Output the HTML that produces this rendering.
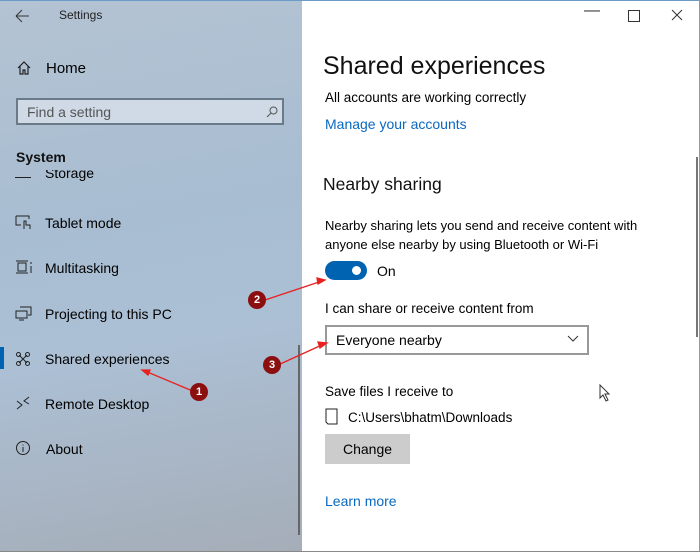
<!DOCTYPE html>
<html><head><style>
body{margin:0;width:700px;height:552px;overflow:hidden;font-family:"Liberation Sans",sans-serif;position:relative;background:#fff}
.l{position:absolute;left:0;top:0;width:302px;height:552px;background:linear-gradient(170deg,#b4c3d3 0%,#a8bdd2 40%,#acc0d5 60%,#a5adb8 100%)}
.t{position:absolute;white-space:nowrap;color:#000}
.s{font-size:14px}
.n{position:absolute;left:0;top:0;width:700px;height:1px;background:#6d9bc8}
.ball{position:absolute;width:18px;height:18px;border-radius:50%;background:#8b0f0f;color:#fff;font-size:11px;font-weight:bold;text-align:center;line-height:18px}
</style></head><body>
<div class="l"></div>
<div class="n"></div>
<div style="position:absolute;right:0;top:0;width:1px;height:552px;background:#999"></div>
<div style="position:absolute;left:0;bottom:0;width:700px;height:1px;background:#888"></div>
<svg style="position:absolute;left:14px;top:8px" width="16" height="16"><path d="M2 8H15M2 8L8 2M2 8L8 14" stroke="#333" fill="none" stroke-width="1"/></svg>
<div class="t" style="left:59px;top:8px;font-size:12px;color:#222">Settings</div>
<svg style="position:absolute;left:16px;top:60px" width="16" height="16"><path d="M2 8L8 2L14 8M4 6V14H7V10H9V14H12V6" stroke="#222" fill="none" stroke-width="1.2"/></svg>
<div class="t s" style="left:46px;top:60px;font-size:15px">Home</div>
<div style="position:absolute;left:16px;top:98px;width:268px;height:27px;border:2px solid #6b7a88;background:#cfdae6;box-sizing:border-box"></div>
<div class="t" style="left:27px;top:104px;font-size:14px;color:#555">Find a setting</div>
<svg style="position:absolute;left:266px;top:106px" width="12" height="12"><circle cx="7.5" cy="4.5" r="3.5" stroke="#555" fill="none"/><path d="M5 7L1 11" stroke="#555"/></svg>
<div class="t" style="left:16px;top:149px;font-size:14px;font-weight:bold;color:#111">System</div>
<div class="t s" style="left:45px;top:170px;font-size:14px;height:12px;overflow:hidden"><span style="position:relative;top:-5px">Storage</span></div>
<div style="position:absolute;left:15px;top:177px;width:16px;height:1px;background:#222"></div>
<div class="t s" style="left:45px;top:215px">Tablet mode</div>
<svg style="position:absolute;left:15px;top:214px" width="18" height="16"><path d="M1 2H14V5M1 2V11H6" stroke="#222" fill="none"/><path d="M9 15V7H11V11H15V15" stroke="#222" fill="none"/></svg>
<div class="t s" style="left:45px;top:260px">Multitasking</div>
<svg style="position:absolute;left:15px;top:259px" width="18" height="16"><path d="M1 2H13M1 14H13M3 4H11V12H3Z M16 3V5M16 7V14" stroke="#222" fill="none"/></svg>
<div class="t s" style="left:45px;top:306px">Projecting to this PC</div>
<svg style="position:absolute;left:15px;top:306px" width="18" height="16"><path d="M5 1H16V9H13M1 5H12V12H1ZM4 14H9" stroke="#222" fill="none"/></svg>
<div style="position:absolute;left:0;top:347px;width:4px;height:22px;background:#0063b1"></div>
<div class="t s" style="left:45px;top:351px">Shared experiences</div>
<svg style="position:absolute;left:15px;top:351px" width="18" height="16"><path d="M4 4L12 12M12 4L4 12" stroke="#222"/><circle cx="3.5" cy="3.5" r="2" stroke="#222" fill="none"/><circle cx="12.5" cy="3.5" r="2" stroke="#222" fill="none"/><circle cx="3.5" cy="12.5" r="2" stroke="#222" fill="none"/><circle cx="12.5" cy="12.5" r="2" stroke="#222" fill="none"/></svg>
<div class="t s" style="left:45px;top:396px">Remote Desktop</div>
<svg style="position:absolute;left:15px;top:395px" width="18" height="16"><path d="M2 6L7 10L2 14M14 2L9 6L14 9" stroke="#222" fill="none"/></svg>
<div class="t s" style="left:46px;top:441px">About</div>
<svg style="position:absolute;left:15px;top:440px" width="16" height="16"><circle cx="8" cy="8" r="6.5" stroke="#222" fill="none"/><path d="M8 7V12M8 4.5V5.5" stroke="#222"/></svg>
<div style="position:absolute;left:298px;top:345px;width:2px;height:190px;background:#666"></div>
<!-- right -->
<div class="t" style="left:584px;top:2px;font-size:16px;color:#333">&#8212;</div>
<div style="position:absolute;left:628px;top:10px;width:10px;height:10px;border:1px solid #333"></div>
<svg style="position:absolute;left:671px;top:9px" width="12" height="12"><path d="M1 1L11 11M11 1L1 11" stroke="#333"/></svg>
<div class="t" style="left:323px;top:52px;font-size:25px;color:#111">Shared experiences</div>
<div class="t" style="left:325px;top:90px;font-size:13.5px">All accounts are working correctly</div>
<div class="t" style="left:325px;top:116px;font-size:14px;color:#0a68c0">Manage your accounts</div>
<div class="t" style="left:323px;top:174px;font-size:17.5px;color:#111">Nearby sharing</div>
<div class="t" style="left:325px;top:216px;font-size:13px;line-height:19px">Nearby sharing lets you send and receive content with<br>anyone else nearby by using Bluetooth or Wi-Fi</div>
<div style="position:absolute;left:325px;top:261px;width:42px;height:19px;border-radius:10px;background:#0063b1"></div>
<div style="position:absolute;left:352px;top:266px;width:9px;height:9px;border-radius:50%;background:#fff"></div>
<div class="t s" style="left:377px;top:263px">On</div>
<div class="t" style="left:325px;top:301px;font-size:13.5px">I can share or receive content from</div>
<div style="position:absolute;left:325px;top:325px;width:264px;height:30px;border:2px solid #999;box-sizing:border-box"></div>
<div class="t s" style="left:336px;top:332px">Everyone nearby</div>
<svg style="position:absolute;left:567px;top:335px" width="12" height="8"><path d="M1 1L6 6L11 1" stroke="#333" fill="none"/></svg>
<div class="t" style="left:325px;top:384px;font-size:13.5px">Save files I receive to</div>
<svg style="position:absolute;left:325px;top:408px" width="14" height="18"><path d="M1 1H12V16H3L1 14Z" stroke="#222" fill="none"/></svg>
<div class="t" style="left:348px;top:410px;font-size:13.5px">C:\Users\bhatm\Downloads</div>
<div style="position:absolute;left:325px;top:434px;width:85px;height:30px;background:#ccc"></div>
<div class="t s" style="left:343px;top:441px">Change</div>
<div class="t" style="left:325px;top:493px;font-size:14px;color:#0a68c0">Learn more</div>
<div style="position:absolute;left:696px;top:157px;width:2px;height:180px;background:#777"></div>
<svg style="position:absolute;left:599px;top:384px" width="12" height="18"><path d="M1 1V14L4 11L7 17L9 16L6 10H10Z" fill="#fff" stroke="#333"/></svg>
<!-- annotations -->
<svg style="position:absolute;left:0;top:0" width="700" height="552"><g stroke="#e82020" stroke-width="1.3" fill="#e82020">
<path d="M195 392L145 371" fill="none"/><path d="M142 370L150 370L148 375Z"/>
<path d="M265 300L322 281" fill="none"/><path d="M325 280L317 278L318 284Z"/>
<path d="M278 365L324 344" fill="none"/><path d="M327 343L318 342L320 348Z"/></g></svg>
<div class="ball" style="left:190px;top:383px">1</div>
<div class="ball" style="left:248px;top:291px">2</div>
<div class="ball" style="left:263px;top:356px">3</div>
</body></html>
